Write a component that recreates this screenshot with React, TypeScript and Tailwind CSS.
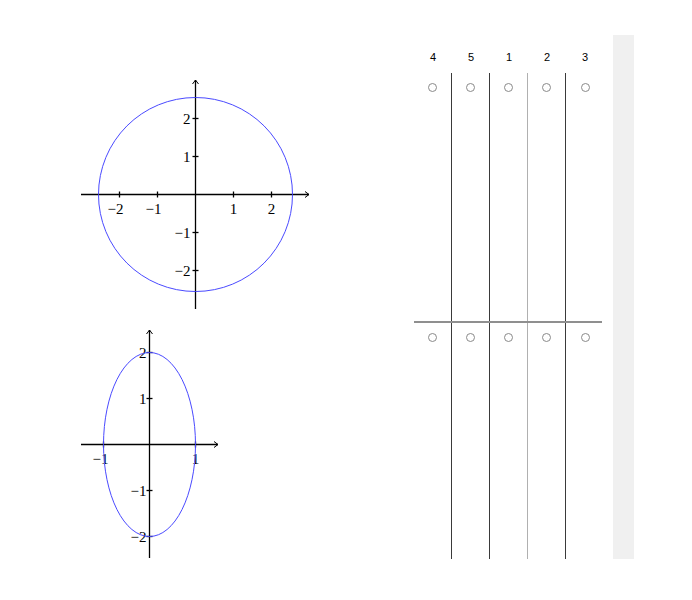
const serif = { fontFamily: '"Liberation Serif", "DejaVu Serif", serif', fontSize: '15px' }

function Tick({ x, y, v }: { x: number; y: number; v: boolean }) {
  return v ? (
    <line x1={x - 3} y1={y} x2={x + 3} y2={y} stroke="#000" strokeWidth={1.3} />
  ) : (
    <line x1={x} y1={y - 3} x2={x} y2={y + 3} stroke="#000" strokeWidth={1.3} />
  )
}

function Axes({ ox, oy, x0, x1, y0, y1 }: { ox: number; oy: number; x0: number; x1: number; y0: number; y1: number }) {
  return (
    <g stroke="#000" strokeWidth={1.3} fill="none">
      <line x1={x0} y1={oy} x2={x1} y2={oy} />
      <line x1={ox} y1={y1} x2={ox} y2={y0} />
      <polyline points={`${x1 - 4},${oy - 3} ${x1},${oy} ${x1 - 4},${oy + 3}`} strokeWidth={1} />
      <polyline points={`${ox - 3},${y0 + 4} ${ox},${y0} ${ox + 3},${y0 + 4}`} strokeWidth={1} />
    </g>
  )
}

const fmt = (k: number) => (k < 0 ? `\u2212${-k}` : `${k}`)

function CircleGraph() {
  const ox = 120.5
  const oy = 119.5
  const u = 38
  return (
    <svg width={240} height={240} viewBox="0 0 240 240" style={serif}>
      <Axes ox={ox} oy={oy} x0={6} x1={234} y0={5} y1={234} />
      {[-2, -1, 1, 2].map((k) => (
        <g key={k}>
          <Tick x={ox + k * u} y={oy} v={false} />
          <Tick x={ox} y={oy - k * u} v={true} />
          <text x={ox + k * u - (k < 0 ? 4 : 0)} y={oy + 19} textAnchor="middle" fill="#000">
            {fmt(k)}
          </text>
          <text x={ox - 5} y={oy - k * u + 5} textAnchor="end" fill="#000">
            {fmt(k)}
          </text>
        </g>
      ))}
      <circle cx={ox} cy={oy} r={97} fill="none" stroke="#4a4aff" strokeWidth={1} />
    </svg>
  )
}

function EllipseGraph() {
  const ox = 74.5
  const oy = 119.5
  const u = 46
  return (
    <svg width={150} height={240} viewBox="0 0 150 240" style={serif}>
      <Axes ox={ox} oy={oy} x0={6} x1={143} y0={5} y1={233} />
      {[-1, 1].map((k) => (
        <g key={k}>
          <Tick x={ox + k * u} y={oy} v={false} />
          <text x={ox + k * u - (k < 0 ? 3 : 0)} y={oy + 19} textAnchor="middle" fill="#000">
            {fmt(k)}
          </text>
        </g>
      ))}
      {[-2, -1, 1, 2].map((k) => (
        <g key={k}>
          <Tick x={ox} y={oy - k * u} v={true} />
          <text x={ox - 3} y={oy - k * u + 5} textAnchor="end" fill="#000">
            {fmt(k)}
          </text>
        </g>
      ))}
      <ellipse cx={ox} cy={oy} rx={u} ry={2 * u} fill="none" stroke="#4a4aff" strokeWidth={1} />
    </svg>
  )
}

const labels = ['4', '5', '1', '2', '3']

function Radio() {
  return <span className="block h-[9px] w-[9px] rounded-full border-[1.5px] border-[#8a8a8a] bg-white" />
}

function Column({ label, idx }: { label: string; idx: number }) {
  const border =
    idx === 4 ? '' : idx === 2 ? 'border-r-[1.5px] border-[#b0b0b0]' : 'border-r-[1.5px] border-[#3a3a3a]'
  return (
    <div className="flex w-[38px] flex-col">
      <div className="flex h-[38px] items-end justify-center pb-[10px] text-[11px] leading-none text-black">
        {label}
      </div>
      <div className={`flex h-[249px] justify-center pt-[10px] ${border}`}>
        <Radio />
      </div>
      <div className={`flex h-[237px] justify-center pt-[11px] ${border}`}>
        <Radio />
      </div>
    </div>
  )
}

export default function App() {
  return (
    <div className="flex h-[600px] w-[692px] items-start bg-white" style={{ fontFamily: '"Liberation Sans", Arial, sans-serif' }}>
      <div className="ml-[75px] mt-[75px] flex w-[339px] flex-col gap-[10px]">
        <CircleGraph />
        <EllipseGraph />
      </div>
      <div className="relative mt-[35px] flex w-[190px]">
        {labels.map((l, i) => (
          <Column key={i} label={l} idx={i} />
        ))}
        <div className="absolute left-0 top-[286px] h-[1.5px] w-[188px] bg-[#8f8f8f]" />
      </div>
      <div className="ml-[9px] mt-[35px] h-[524px] w-[21px] bg-[#f0f0f0]" />
    </div>
  )
}
